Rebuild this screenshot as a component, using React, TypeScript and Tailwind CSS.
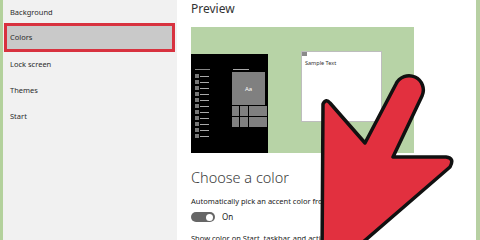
import React from "react";

const font = { fontFamily: '"Noto Sans", "Open Sans", sans-serif' };

function Arrow() {
  const d =
    "M 396 84 A 14 14 0 0 1 422 96 L 393 157 L 446 157 Q 455 158 450 167 L 340 262 L 322 262 L 323 104 Q 326 98 330 103 L 365 143 Z";
  return (
    <svg
      className="absolute left-0 top-0 pointer-events-none"
      width={480}
      height={240}
      viewBox="0 0 480 240"
    >
      <path d={d} fill="#e2303f" stroke="#111" strokeWidth={3.5} strokeLinejoin="round" />
    </svg>
  );
}

function StartPanel() {
  const rows = Array.from({ length: 11 });
  return (
    <div className="w-[77px] h-[99px] bg-black flex flex-row pt-[15px] pl-[4px] gap-[22px]">
      <div className="flex flex-col gap-[2px]">
        <div className="w-[15px] h-[1px] bg-[#888] mb-[2px]" />
        {rows.map((_, i) => (
          <div key={i} className="flex flex-row items-center gap-[1px] h-[4px]">
            <div className="w-[4px] h-[4px] bg-[#777]" />
            <div className="w-[9px] h-[1px] bg-[#aaa]" />
          </div>
        ))}
      </div>
      <div className="flex flex-col">
        <div className="w-[16px] h-[1px] bg-[#aaa] mb-[2px] ml-[1px]" />
        <div className="w-[33px] h-[33px] bg-[#808080] flex items-center justify-center text-[6px] text-white leading-none">
          Aa
        </div>
        <div className="grid grid-cols-[7px_8px_18px] gap-[1px] mt-[1px] w-[33px]">
          <div className="h-[10px] bg-[#808080]" />
          <div className="h-[10px] bg-[#808080]" />
          <div className="h-[10px] bg-[#808080]" />
          <div className="h-[10px] bg-[#808080]" />
          <div className="h-[10px] bg-[#808080]" />
          <div className="h-[10px] bg-[#808080]" />
        </div>
      </div>
    </div>
  );
}

function Preview() {
  return (
    <div className="w-[223px] h-[126px] shrink-0 bg-[#b7d3a6] flex flex-col">
      <div className="flex-1 flex flex-row items-start">
        <div className="mt-[27px]">
          <StartPanel />
        </div>
        <div className="ml-[33px] mt-[24px] w-[81px] h-[71px] bg-white border border-[#bdbdbd] flex flex-col">
          <div className="w-[5px] h-[4px] bg-[#8a8a8a]" />
          <div className="text-[5.5px] text-[#333] pl-[3px] mt-[5px] leading-none">Sample Text</div>
        </div>
      </div>
      <div className="h-[6px] bg-black" />
    </div>
  );
}

function SideItem({ label }: { label: string }) {
  return (
    <div className="h-[26px] shrink-0 flex items-center pl-[7px] text-[7.5px] text-[#2b2b2b]">{label}</div>
  );
}

export default function App() {
  return (
    <div className="relative w-[480px] h-[240px] overflow-hidden bg-white flex flex-row" style={font}>
      <div className="w-[3px] bg-[#b3d19c]" />
      <div className="w-[174px] bg-[#f1f1f1] flex flex-col">
        <div className="h-[23px] shrink-0 flex items-center pl-[7px] pt-[3px] text-[7.5px] text-[#2b2b2b]">Background</div>
        <div className="h-[29px] shrink-0 ml-[1px] w-[171px] border-[3px] border-[#d8323f] bg-[#c9c9c9] flex items-center pl-[3px] text-[7.5px] text-[#2b2b2b]">
          Colors
        </div>
        <SideItem label="Lock screen" />
        <SideItem label="Themes" />
        <SideItem label="Start" />
      </div>
      <div className="flex-1 bg-white pl-[14px] flex flex-col">
        <div className="h-[27px] shrink-0 text-[12px] leading-[18px] text-[#333]">Preview</div>
        <Preview />
        <div className="mt-[14px] shrink-0 text-[14.5px] leading-[20px] text-[#3a3a3a] font-light">Choose a color</div>
        <div className="mt-[8px] shrink-0 text-[7.5px] leading-[12px] text-[#222] whitespace-nowrap">
          Automatically pick an accent color from my background
        </div>
        <div className="mt-[5px] shrink-0 flex flex-row items-center gap-[7px]">
          <div className="w-[24px] h-[10px] rounded-full bg-[#666] flex items-center justify-end pr-[2px]">
            <div className="w-[7px] h-[7px] rounded-full bg-white" />
          </div>
          <div className="text-[8px] leading-[10px] text-[#222]">On</div>
        </div>
        <div className="mt-[10px] shrink-0 text-[7.5px] leading-[12px] text-[#222] whitespace-nowrap">
          Show color on Start, taskbar, and action center
        </div>
      </div>
      <div className="w-[4px] bg-[#b7d0a3]" />
      <Arrow />
    </div>
  );
}
